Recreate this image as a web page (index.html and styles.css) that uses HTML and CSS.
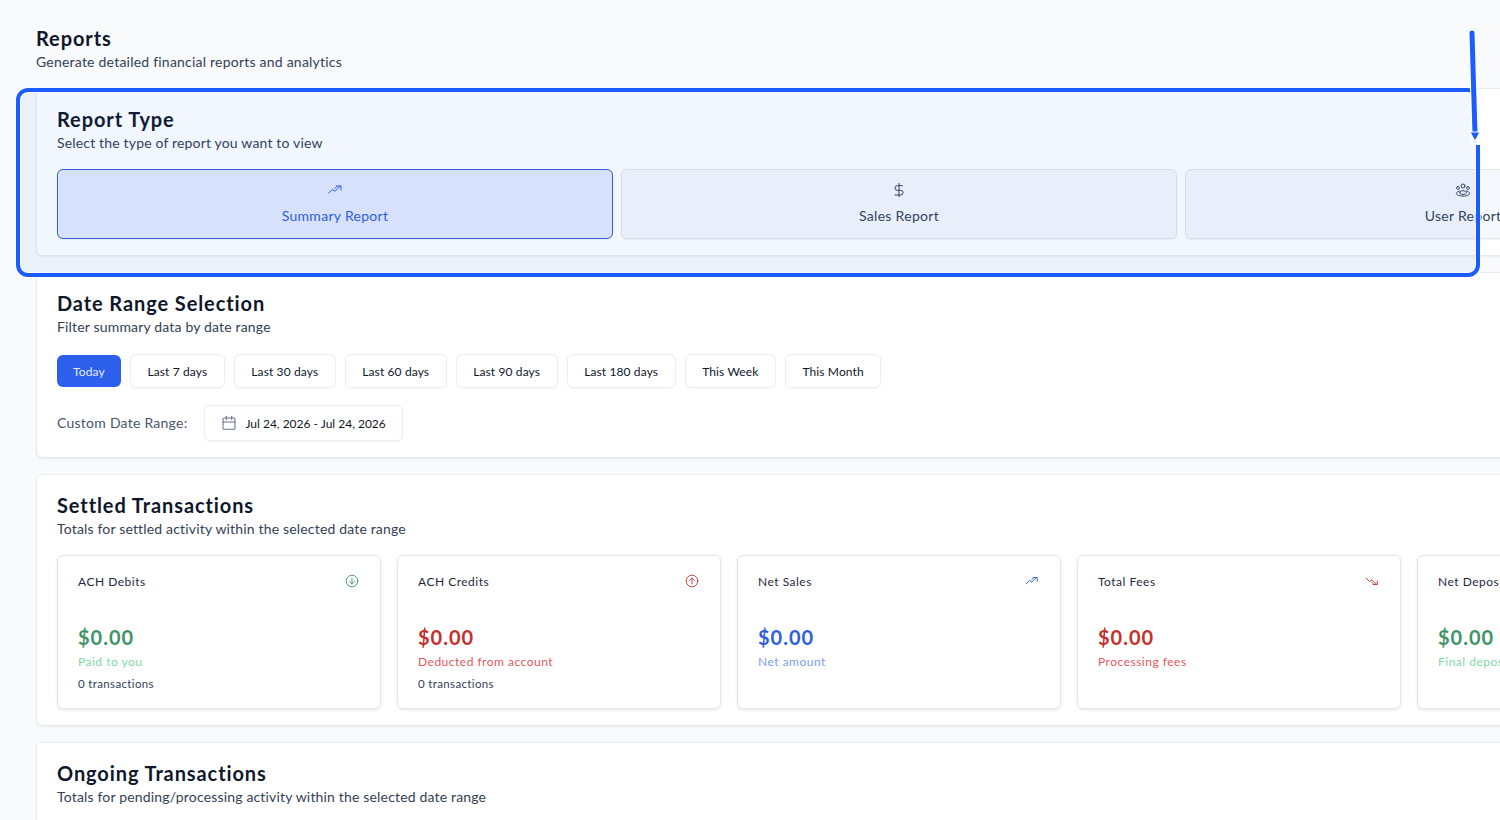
FILE: index.html
```html
<!DOCTYPE html>
<html>

<head>
    <meta charset="UTF-8">
    <title>Reports</title>
    <link rel="stylesheet" href="styles.css">
</head>

<body>
    <div class="page">
        <div class="page-head">
            <h1>Reports</h1>
            <p>Generate detailed financial reports and analytics</p>
        </div>

        <section class="panel">
            <h2>Report Type</h2>
            <p class="panel-sub">Select the type of report you want to view</p>
            <div class="type-grid">
                <div class="type-btn active">
                    <svg class="ic" viewBox="0 0 24 24"><path d="M2 17l6-6 4 3 8-8"/><path d="M14 6h7v6"/><path d="M12 9.5l3-3"/></svg>
                    <span>Summary Report</span>
                </div>
                <div class="type-btn">
                    <svg class="ic" viewBox="0 0 24 24"><path d="M12 2v20"/><path d="M17 5.5H9.5a3.5 3.5 0 0 0 0 7h5a3.5 3.5 0 0 1 0 7H6"/></svg>
                    <span>Sales Report</span>
                </div>
                <div class="type-btn">
                    <svg class="ic" viewBox="0 0 24 24"><circle cx="12" cy="6" r="3"/><rect x="2.5" y="7" width="4" height="4" rx="1.5"/><rect x="17.5" y="7" width="4" height="4" rx="1.5"/><path d="M7 13.5c-3 .8-5 2-5 3.5 0 2.5 4.5 4 10 4s10-1.5 10-4c0-1.5-2-2.7-5-3.500"/><path d="M7 16c0-1.700 2.200-3 5-3s5 1.300 5 3-2.200 2.500-5 2.500-5-.8-5-2.500z"/></svg>
                    <span>User Report</span>
                </div>
            </div>
        </section>

        <section class="panel">
            <h2>Date Range Selection</h2>
            <p class="panel-sub">Filter summary data by date range</p>
            <div class="chips">
                <div class="chip today">Today</div>
                <div class="chip">Last 7 days</div>
                <div class="chip">Last 30 days</div>
                <div class="chip">Last 60 days</div>
                <div class="chip">Last 90 days</div>
                <div class="chip">Last 180 days</div>
                <div class="chip">This Week</div>
                <div class="chip">This Month</div>
            </div>
            <div class="custom-range">
                <span class="custom-label">Custom Date Range:</span>
                <div class="date-btn">
                    <svg class="cal" viewBox="0 0 24 24"><rect x="3" y="4.500" width="18" height="17" rx="2"/><path d="M8 2v5"/><path d="M16 2v5"/><path d="M3 10.500h18"/></svg>
                    <span>Jul 24, 2026 - Jul 24, 2026</span>
                </div>
            </div>
        </section>

        <section class="panel">
            <h2>Settled Transactions</h2>
            <p class="panel-sub">Totals for settled activity within the selected date range</p>
            <div class="stats">
                <div class="stat">
                    <div class="stat-top">
                        <span>ACH Debits</span>
                        <svg class="stat-ic green" viewBox="0 0 24 24"><circle cx="12" cy="12" r="10"/><path d="M12 7v10"/><path d="M8 13l4 4 4-4"/></svg>
                    </div>
                    <div class="amount green">$0.00</div>
                    <div class="note light-green">Paid to you</div>
                    <div class="count">0 transactions</div>
                </div>
                <div class="stat">
                    <div class="stat-top">
                        <span>ACH Credits</span>
                        <svg class="stat-ic red" viewBox="0 0 24 24"><circle cx="12" cy="12" r="10"/><path d="M12 17V7"/><path d="M8 11l4-4 4 4"/></svg>
                    </div>
                    <div class="amount red">$0.00</div>
                    <div class="note light-red">Deducted from account</div>
                    <div class="count">0 transactions</div>
                </div>
                <div class="stat">
                    <div class="stat-top">
                        <span>Net Sales</span>
                        <svg class="stat-ic trend blue" viewBox="0 0 24 24"><path d="M2 17l6-6 4 3 8-8"/><path d="M14 6h7v6"/><path d="M12 9.500l3-3"/></svg>
                    </div>
                    <div class="amount blue">$0.00</div>
                    <div class="note light-blue">Net amount</div>
                </div>
                <div class="stat">
                    <div class="stat-top">
                        <span>Total Fees</span>
                        <svg class="stat-ic trend red" viewBox="0 0 24 24"><path d="M2 7l6 6 4-3 8 8"/><path d="M14 18h7v-6"/><path d="M12 14.500l3 3"/></svg>
                    </div>
                    <div class="amount red">$0.00</div>
                    <div class="note light-red">Processing fees</div>
                </div>
                <div class="stat">
                    <div class="stat-top">
                        <span>Net Deposits</span>
                    </div>
                    <div class="amount green">$0.00</div>
                    <div class="note light-green">Final deposit amount</div>
                </div>
            </div>
        </section>

        <section class="panel">
            <h2>Ongoing Transactions</h2>
            <p class="panel-sub">Totals for pending/processing activity within the selected date range</p>
        </section>
    </div>

    <!-- annotation drawn over the page -->
    <div class="highlight"></div>
    <svg class="arrow" viewBox="0 0 30 130" width="30" height="130">
        <path class="arrow-halo" d="M7 7L10 108"/>
        <path class="arrow-line" d="M7 7L10 108"/>
        <path class="arrow-head" d="M5 106H15L10 115z"/>
        <circle class="arrow-dot" cx="10" cy="116" r="2"/>
    </svg>
</body>

</html>
```

FILE: styles.css
```css
html, body {
    margin: 0;
    height: 820px;
    overflow: hidden;
}

body {
    position: relative;
    background: #f8fafc;
    font-family: "Lato", "Open Sans", sans-serif;
    color: #0f172a;
}

h1, h2, p {
    margin: 0;
}

.page {
    width: 1726px;
    padding: 26px 0 0 36px;
    display: flex;
    flex-direction: column;
    gap: 16px;
}

.page-head {
    height: 46px;
}

.page-head h1 {
    font-size: 20px;
    line-height: 24px;
    font-weight: 700;
    letter-spacing: 0.9px;
}

.page-head p {
    margin-top: 2px;
    font-size: 14px;
    line-height: 20px;
    color: #334155;
    letter-spacing: 0.22px;
}

.panel {
    background: #fff;
    border: 1px solid #e8ebf0;
    border-radius: 6px;
    box-shadow: 0 1px 2px rgba(15, 23, 42, 0.06);
    padding: 18px 20px 16px;
}

.panel h2 {
    font-size: 20px;
    line-height: 24px;
    font-weight: 700;
    letter-spacing: 0.9px;
}

.panel-sub {
    font-size: 14px;
    line-height: 20px;
    margin-top: 2px;
    color: #334155;
    letter-spacing: 0.17px;
}

.type-grid {
    display: grid;
    grid-template-columns: repeat(3, 1fr);
    gap: 8px;
    margin-top: 16px;
}

.type-btn {
    height: 70px;
    box-sizing: border-box;
    display: flex;
    flex-direction: column;
    align-items: center;
    padding-top: 12px;
    gap: 8px;
    background: #f5f8fc;
    border: 1px solid #e2e5ea;
    border-radius: 6px;
    box-shadow: 0 1px 2px rgba(15, 23, 42, 0.06);
    font-size: 14px;
    line-height: 20px;
    color: #334155;
    letter-spacing: 0.3px;
}

.type-btn.active {
    background: #e3e9fd;
    border-color: #2f5fd8;
    color: #2f5fe0;
}

.ic {
    width: 16px;
    height: 16px;
    fill: none;
    stroke: currentColor;
    stroke-width: 1.5;
    stroke-linecap: round;
    stroke-linejoin: round;
}

.chips {
    display: flex;
    align-items: center;
    gap: 9px;
    margin-top: 17px;
}

.chip {
    height: 34px;
    box-sizing: border-box;
    padding: 0 16.5px;
    display: flex;
    align-items: center;
    background: #fff;
    border: 1px solid #eceef2;
    border-radius: 6px;
    box-shadow: 0 1px 2px rgba(15, 23, 42, 0.04);
    font-size: 12px;
    letter-spacing: 0.12px;
}

.chip.today {
    height: 32px;
    padding: 0 16px;
    background: #2c5fec;
    border: none;
    box-shadow: none;
    color: #e6ecff;
    letter-spacing: 0.15px;
}

.custom-range {
    display: flex;
    align-items: center;
    gap: 17px;
    margin-top: 17px;
}

.custom-label {
    padding-bottom: 1px;
    font-size: 14px;
    color: #475569;
    letter-spacing: 0.25px;
}

.date-btn {
    height: 36px;
    box-sizing: border-box;
    padding: 0 16px;
    display: flex;
    align-items: center;
    gap: 8px;
    border: 1px solid #eceef2;
    border-radius: 6px;
    box-shadow: 0 1px 2px rgba(15, 23, 42, 0.04);
    font-size: 12px;
}

.cal {
    width: 16px;
    height: 16px;
    fill: none;
    stroke: #64748b;
    stroke-width: 1.6;
    stroke-linecap: round;
}

.stats {
    display: grid;
    grid-template-columns: repeat(5, 1fr);
    gap: 16px;
    margin-top: 16px;
}

.stat {
    height: 154px;
    box-sizing: border-box;
    padding: 16px 20px;
    border: 1px solid #e5e7eb;
    border-radius: 6px;
    box-shadow: 0 1px 3px rgba(15, 23, 42, 0.1);
}

.stat-top {
    display: flex;
    justify-content: space-between;
    align-items: center;
    height: 18px;
    font-size: 12px;
    letter-spacing: 0.5px;
    color: #1e293b;
}

.stat-ic {
    width: 14px;
    height: 14px;
    margin-right: 1px;
    fill: none;
    stroke: currentColor;
    stroke-width: 1.5;
    stroke-linecap: round;
    stroke-linejoin: round;
}

.stat-ic.trend {
    stroke-width: 1.6;
}

.amount {
    margin-top: 33px;
    font-size: 20px;
    line-height: 28px;
    font-weight: 700;
    letter-spacing: 1px;
}

.note {
    margin-top: 3px;
    font-size: 12px;
    line-height: 16px;
    letter-spacing: 0.5px;
}

.count {
    margin-top: 6px;
    font-size: 11.5px;
    line-height: 16px;
    color: #334155;
    letter-spacing: 0.35px;
}

.green { color: #3f9466; }
.red { color: #c5302b; }
.blue { color: #2f5fe0; }
.light-green { color: #7ed9a6; }
.light-red { color: #e5575c; }
.light-blue { color: #7d9df0; }

/* right side stops where the arrow comes in */
.highlight {
    position: absolute;
    left: 16px;
    top: 88px;
    width: 1456px;
    height: 181px;
    border: 4px solid #1a5cff;
    border-radius: 12px;
    background: rgba(37, 99, 235, 0.06);
    box-shadow: inset 0 0 0 1px rgba(255, 255, 255, 0.7), 0 0 0 1px rgba(255, 255, 255, 0.7);
    clip-path: polygon(-2px -2px, 1454px -2px, 1454px 57px, calc(100% + 2px) 57px, calc(100% + 2px) calc(100% + 2px), -2px calc(100% + 2px));
}

.arrow {
    position: absolute;
    left: 1465px;
    top: 26px;
    fill: none;
}

.arrow-halo {
    stroke: #fff;
    stroke-width: 7;
    stroke-linecap: round;
}

.arrow-line {
    stroke: #1a5cff;
    stroke-width: 5;
    stroke-linecap: round;
}

.arrow-head {
    fill: #1a5cff;
    stroke: #fff;
    stroke-width: 1;
}

.arrow-dot {
    fill: #dce6ff;
    stroke: #fff;
    stroke-width: 1;
}
```
